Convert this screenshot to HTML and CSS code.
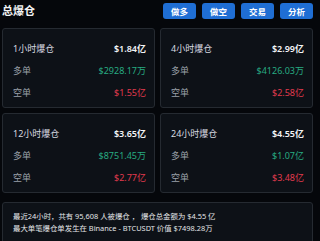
FILE: index.html
```html
<!doctype html>
<html lang="zh">
  <head>
    <meta charset="UTF-8" />
    <meta name="viewport" content="width=device-width, initial-scale=1.0" />
    <title>总爆仓</title>
    <link rel="stylesheet" href="styles.css">
  </head>
  <body>
    <div class="page">
      <div class="header">
        <div class="title">总爆仓</div>
        <div class="buttons">
          <button>做多</button>
          <button>做空</button>
          <button>交易</button>
          <button>分析</button>
        </div>
      </div>

      <div class="grid">
        <div class="card">
          <div class="row head"><span>1小时爆仓</span><span class="val">$1.84亿</span></div>
          <div class="row"><span>多单</span><span class="long">$2928.17万</span></div>
          <div class="row"><span>空单</span><span class="short">$1.55亿</span></div>
        </div>
        <div class="card">
          <div class="row head"><span>4小时爆仓</span><span class="val">$2.99亿</span></div>
          <div class="row"><span>多单</span><span class="long">$4126.03万</span></div>
          <div class="row"><span>空单</span><span class="short">$2.58亿</span></div>
        </div>
        <div class="card">
          <div class="row head"><span>12小时爆仓</span><span class="val">$3.65亿</span></div>
          <div class="row"><span>多单</span><span class="long">$8751.45万</span></div>
          <div class="row"><span>空单</span><span class="short">$2.77亿</span></div>
        </div>
        <div class="card">
          <div class="row head"><span>24小时爆仓</span><span class="val">$4.55亿</span></div>
          <div class="row"><span>多单</span><span class="long">$1.07亿</span></div>
          <div class="row"><span>空单</span><span class="short">$3.48亿</span></div>
        </div>
      </div>

      <div class="summary">
        <div class="line">最近24小时，共有 95,608 人被爆仓 ， 爆仓总金额为 $4.55 亿</div>
        <div class="line">最大单笔爆仓单发生在 Binance - BTCUSDT 价值 $7498.28万</div>
      </div>
    </div>
  </body>
</html>
```

FILE: styles.css
```css
body {
  margin: 0;
  background: #05070b;
  color: #e6e8eb;
  font-family: "Noto Sans", "Noto Sans CJK SC", sans-serif;
  overflow: hidden;
}
.page {
  width: 311px;
  padding-left: 2px;
}
.header {
  display: flex;
  justify-content: space-between;
  align-items: center;
  height: 20px;
  margin-bottom: 8px;
}
.title {
  font-size: 11px;
  font-weight: bold;
  color: #f2f3f5;
}
.buttons {
  display: flex;
  gap: 6px;
  margin-top: 1px;
}
button {
  width: 33px;
  height: 16px;
  padding: 0;
  border: none;
  border-radius: 3px;
  background: #1f6ed4;
  color: #fff;
  font-family: inherit;
  font-size: 8.5px;
  font-weight: bold;
}
.grid {
  display: grid;
  grid-template-columns: 1fr 1fr;
  gap: 5px;
}
.card {
  background: #0d1117;
  border: 1px solid #252a31;
  border-radius: 3px;
  padding: 8px 8px 4px 10px;
}
.row {
  display: flex;
  justify-content: space-between;
  align-items: center;
  height: 22px;
  font-size: 9px;
  color: #9aa0a8;
}
.head {
  color: #d8dbe0;
}
.val {
  color: #f4f5f7;
  font-weight: 600;
}
.long {
  color: #27ab82;
}
.short {
  color: #e23a4e;
}
.summary {
  margin-top: 9px;
  background: #0d1117;
  border: 1px solid #252a31;
  border-radius: 3px;
  padding: 7px 10px 10px;
  font-size: 7.4px;
  line-height: 12px;
  color: #e3e5e8;
}
.line {
  white-space: pre;
}
```
